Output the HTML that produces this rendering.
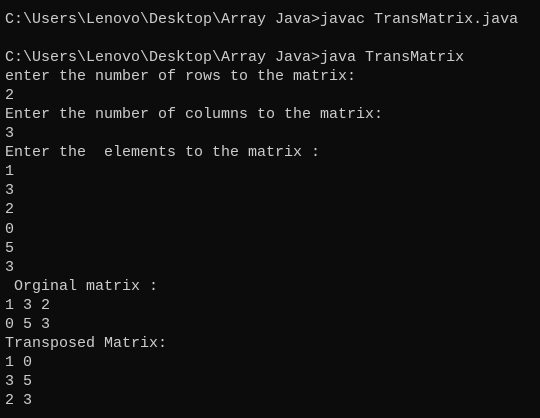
<!DOCTYPE html>
<html><head><meta charset="utf-8"><style>
html,body{margin:0;padding:0;background:#0c0c0c;width:540px;height:418px;overflow:hidden}
pre{margin:0;padding:10px 0 0 5px;font-family:"Liberation Mono","DejaVu Sans Mono",monospace;font-size:15px;line-height:19.05px;color:#cccccc}
</style></head><body><pre>C:\Users\Lenovo\Desktop\Array Java>javac TransMatrix.java

C:\Users\Lenovo\Desktop\Array Java>java TransMatrix
enter the number of rows to the matrix:
2
Enter the number of columns to the matrix:
3
Enter the  elements to the matrix :
1
3
2
0
5
3
 Orginal matrix :
1 3 2
0 5 3
Transposed Matrix:
1 0
3 5
2 3</pre></body></html>
